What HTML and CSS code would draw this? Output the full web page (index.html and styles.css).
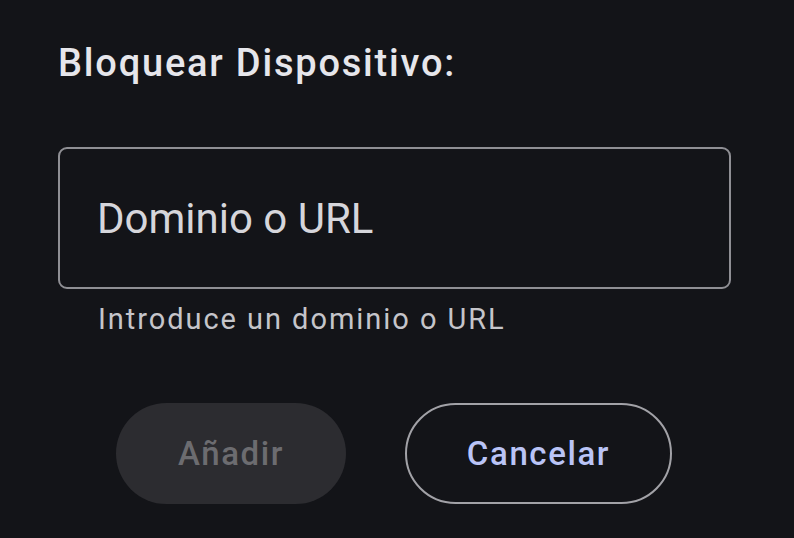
FILE: index.html
```html
<!DOCTYPE html>
<html lang="es">
<head>
<meta charset="utf-8">
<link rel="stylesheet" href="styles.css">
</head>
<body>
<div class="dialog">
  <h1 class="title">Bloquear Dispositivo:</h1>
  <div class="field">
    <div class="input"><span class="placeholder">Dominio o URL</span></div>
    <div class="helper">Introduce un dominio o URL</div>
  </div>
  <div class="actions">
    <button class="btn btn-add" disabled>Añadir</button>
    <button class="btn btn-cancel">Cancelar</button>
  </div>
</div>
</body>
</html>
```
FILE: styles.css
```css
html, body {
  margin: 0;
  padding: 0;
  background: #131418;
  width: 794px;
  height: 538px;
  overflow: hidden;
}
.dialog {
  font-family: Roboto, "Noto Sans", sans-serif;
  padding: 41px 63px 0 58px;
}
.title {
  margin: 0;
  font-weight: 500;
  font-size: 38px;
  line-height: 44px;
  color: #e6e6eb;
  letter-spacing: 1.8px;
}
.field {
  margin-top: 62px;
}
.input {
  box-sizing: border-box;
  height: 142px;
  border: 2px solid #8f8f94;
  border-radius: 9px;
  display: flex;
  align-items: center;
  padding-left: 37px;
}
.placeholder {
  font-size: 42px;
  color: #d6d6db;
}
.helper {
  margin-top: 13px;
  padding-left: 40px;
  font-size: 29px;
  line-height: 34px;
  color: #c5c5ca;
  letter-spacing: 1.95px;
}
.actions {
  margin-top: 67px;
  display: flex;
  gap: 59px;
  padding-left: 58px;
}
.btn {
  height: 101px;
  border-radius: 51px;
  font-family: Roboto, "Noto Sans", sans-serif;
  font-weight: 500;
  font-size: 33px;
  box-sizing: border-box;
  letter-spacing: 1.6px;
  padding: 0;
}
.btn-add {
  width: 230px;
  background: #2c2c30;
  color: #6c6c70;
  border: none;
}
.btn-cancel {
  width: 267px;
  background: transparent;
  color: #bac4f6;
  border: 2px solid #a2a2a7;
}
```
